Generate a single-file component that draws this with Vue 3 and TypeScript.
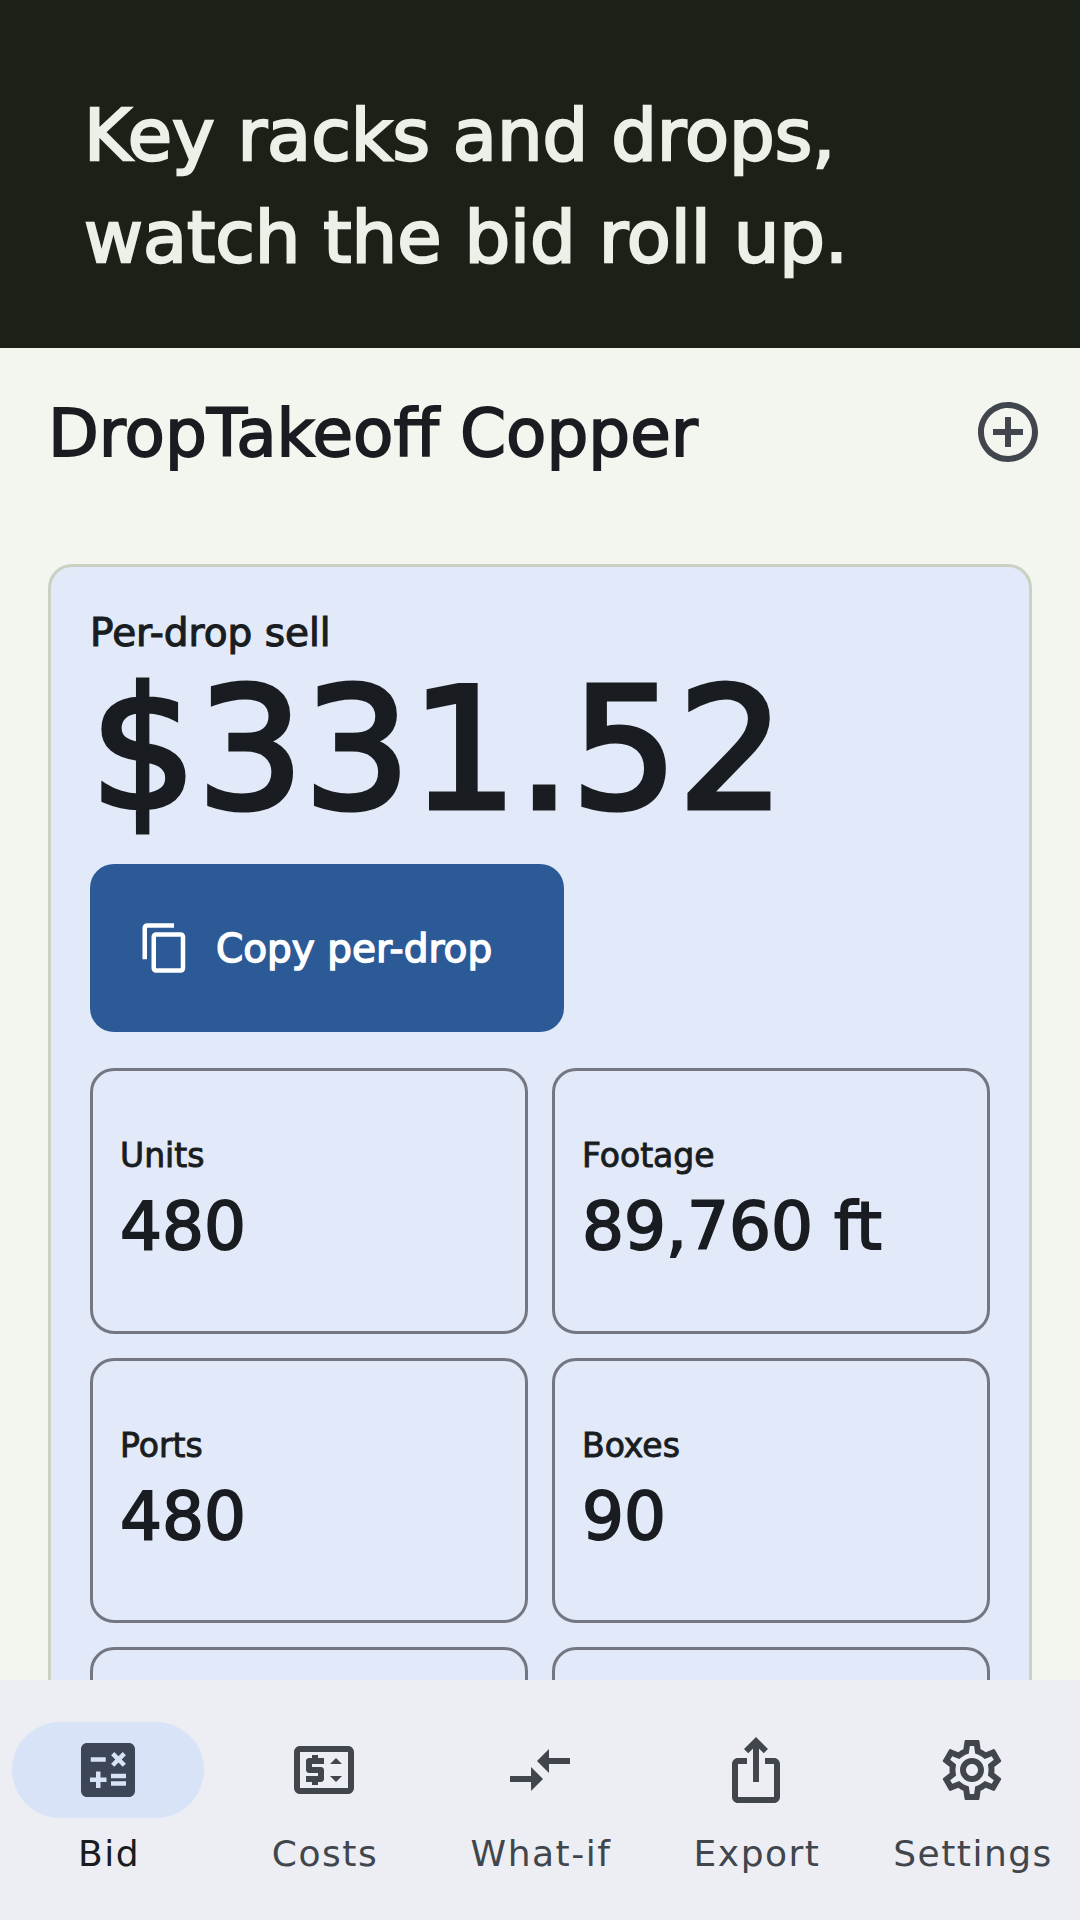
<script setup lang="ts">
interface Stat { id: number; label: string; value: string }
interface NavItem { label: string; d: string; active?: boolean }

const stats: Stat[] = [
  { id: 1, label: 'Units', value: '480' },
  { id: 2, label: 'Footage', value: '89,760 ft' },
  { id: 3, label: 'Ports', value: '480' },
  { id: 4, label: 'Boxes', value: '90' },
  { id: 5, label: '', value: '' },
  { id: 6, label: '', value: '' },
]

const navItems: NavItem[] = [
  { label: 'Bid', active: true, d: 'M19,3H5C3.9,3,3,3.9,3,5v14c0,1.1,0.9,2,2,2h14c1.1,0,2-0.9,2-2V5C21,3.9,20.1,3,19,3z M13.03,7.06L14.09,6l1.41,1.41 L16.91,6l1.06,1.06l-1.41,1.41l1.41,1.41l-1.06,1.06L15.5,9.54l-1.41,1.41l-1.06-1.06l1.41-1.41L13.03,7.06z M6.25,7.72h5v1.5h-5 V7.72z M11.5,16h-2v2H8v-2H6v-1.5h2v-2h1.5v2h2V16z M18,17.25h-5v-1.5h5V17.25z M18,14.75h-5v-1.5h5V14.75z' },
  { label: 'Costs', d: 'M8,17h2v-1h1c0.55,0,1-0.45,1-1v-3c0-0.55-0.45-1-1-1H8v-1h4V8h-2V7H8v1H7C6.45,8,6,8.45,6,9v3c0,0.55,0.45,1,1,1h3v1H6v2h2V17z M20,4H4C2.89,4,2.01,4.89,2.01,6L2,18c0,1.11,0.89,2,2,2h16c1.11,0,2-0.89,2-2V6C22,4.89,21.11,4,20,4z M20,18H4V6h16V18z M14,10l2-2l2,2H14z M18,14l-2,2l-2-2H18z' },
  { label: 'What-if', d: 'M9.01 14H2v2h7.01v3L13 15l-3.99-4v3zm5.98-1v-3H22V8h-7.01V5L11 9l3.99 4z' },
  { label: 'Export', d: 'M16 5l-1.42 1.42-1.59-1.59V16h-1.98V4.83L9.42 6.42 8 5l4-4 4 4zm4 5v11c0 1.1-.9 2-2 2H6c-1.11 0-2-.9-2-2V10c0-1.11.89-2 2-2h3v2H6v11h12V10h-3V8h3c1.1 0 2 .89 2 2z' },
  { label: 'Settings', d: 'M19.43 12.98c.04-.32.07-.64.07-.98 0-.34-.03-.66-.07-.98l2.11-1.65c.19-.15.24-.42.12-.64l-2-3.46c-.09-.16-.26-.25-.44-.25-.06 0-.12.01-.17.03l-2.49 1c-.52-.4-1.08-.73-1.69-.98l-.38-2.65C14.46 2.18 14.25 2 14 2h-4c-.25 0-.46.18-.49.42l-.38 2.65c-.61.25-1.17.59-1.69.98l-2.49-1c-.06-.02-.12-.03-.18-.03-.17 0-.34.09-.43.25l-2 3.46c-.13.22-.07.49.12.64l2.11 1.65c-.04.32-.07.65-.07.98 0 .33.03.66.07.98l-2.11 1.65c-.19.15-.24.42-.12.64l2 3.46c.09.16.26.25.44.25.06 0 .12-.01.17-.03l2.49-1c.52.4 1.08.73 1.69.98l.38 2.65c.03.24.24.42.49.42h4c.25 0 .46-.18.49-.42l.38-2.65c.61-.25 1.17-.59 1.69-.98l2.49 1c.06.02.12.03.18.03.17 0 .34-.09.43-.25l2-3.46c.12-.22.07-.49-.12-.64l-2.11-1.65zm-1.98-1.71c.04.31.05.52.05.73 0 .21-.02.43-.05.73l-.14 1.13.89.7 1.08.84-.7 1.21-1.27-.51-1.04-.42-.9.68c-.43.32-.84.56-1.25.73l-1.06.43-.16 1.13-.2 1.35h-1.4l-.19-1.35-.16-1.13-1.06-.43c-.43-.18-.83-.41-1.23-.71l-.91-.7-1.06.43-1.27.51-.7-1.21 1.08-.84.89-.7-.14-1.13c-.03-.31-.05-.54-.05-.74s.02-.43.05-.73l.14-1.13-.89-.7-1.08-.84.7-1.21 1.27.51 1.04.42.9-.68c.43-.32.84-.56 1.25-.73l1.06-.43.16-1.13.2-1.35h1.39l.19 1.35.16 1.13 1.06.43c.43.18.83.41 1.23.71l.91.7 1.06-.43 1.27-.51.7 1.21-1.07.85-.89.7.14 1.13zM12 8c-2.21 0-4 1.79-4 4s1.79 4 4 4 4-1.79 4-4-1.79-4-4-4zm0 6c-1.1 0-2-.9-2-2s.9-2 2-2 2 .9 2 2-.9 2-2 2z' },
]
</script>

<template>
  <div class="app">
    <header class="hero">
      <h1 class="hero-text">Key racks and drops,<br />watch the bid roll up.</h1>
    </header>
    <main class="main">
      <div class="top-bar">
        <h2 class="title">DropTakeoff Copper</h2>
        <button class="icon-btn" aria-label="Add">
          <svg class="icon-72" viewBox="0 0 24 24"><path d="M13 7h-2v4H7v2h4v4h2v-4h4v-2h-4V7zm-1-5C6.48 2 2 6.48 2 12s4.48 10 10 10 10-4.48 10-10S17.52 2 12 2zm0 18c-4.41 0-8-3.59-8-8s3.59-8 8-8 8 3.59 8 8-3.59 8-8 8z" /></svg>
        </button>
      </div>
      <section class="card">
        <div class="sell-label">Per-drop sell</div>
        <div class="price">$331.52</div>
        <button class="copy-btn">
          <svg class="copy-icon" viewBox="0 0 24 24"><path d="M16 1H4c-1.1 0-2 .9-2 2v14h2V3h12V1zm3 4H8c-1.1 0-2 .9-2 2v14c0 1.1.9 2 2 2h11c1.1 0 2-.9 2-2V7c0-1.1-.9-2-2-2zm0 16H8V7h11v14z" /></svg>
          <span>Copy per-drop</span>
        </button>
        <div class="stats">
          <div v-for="s in stats" :key="s.id" class="stat">
            <div v-if="s.label" class="stat-label">{{ s.label }}</div>
            <div v-if="s.value" class="stat-value">{{ s.value }}</div>
          </div>
        </div>
      </section>
    </main>
    <nav class="nav">
      <div v-for="item in navItems" :key="item.label" class="nav-item" :class="{ active: item.active }">
        <div class="pill">
          <svg class="icon-72" viewBox="0 0 24 24"><path :d="item.d" /></svg>
        </div>
        <div class="nav-label">{{ item.label }}</div>
      </div>
    </nav>
  </div>
</template>

<style>
html, body { margin: 0; padding: 0; }
</style>

<style scoped>
.app {
  width: 1080px;
  height: 1920px;
  display: flex;
  flex-direction: column;
  overflow: hidden;
  background: #f3f6ef;
  font-family: "DejaVu Sans", sans-serif;
  color: #191c20;
}
.hero {
  flex: none;
  background: #1c2118;
  padding: 84px 84px 60px;
}
.hero-text {
  margin: 0;
  font-size: 72px;
  line-height: 102px;
  font-weight: 400;
  color: #edf0e8;
  -webkit-text-stroke: 2.4px #edf0e8;
}
.main {
  flex: 1;
  min-height: 0;
  overflow: hidden;
}
.top-bar {
  display: flex;
  align-items: center;
  justify-content: space-between;
  padding: 12px 0 0 48px;
}
.title {
  margin: 0;
  padding-top: 4px;
  font-size: 66px;
  line-height: 88px;
  font-weight: 400;
  -webkit-text-stroke: 1.8px #191c20;
}
.icon-btn {
  width: 144px;
  height: 144px;
  padding: 0;
  border: 0;
  background: transparent;
  display: flex;
  align-items: center;
  justify-content: center;
}
.icon-72 {
  width: 72px;
  height: 72px;
  display: block;
  fill: #41454c;
}
.card {
  margin: 60px 48px 0;
  padding: 39px;
  border: 3px solid #cbd1c2;
  border-radius: 24px;
  background: #e2e9f8;
}
.sell-label {
  font-size: 39px;
  line-height: 54px;
  -webkit-text-stroke: 1.1px #191c20;
}
.price {
  margin-top: -6px;
  font-size: 168px;
  line-height: 192px;
  -webkit-text-stroke: 5.2px #191c20;
}
.copy-btn {
  display: flex;
  align-items: center;
  gap: 24px;
  width: 474px;
  height: 168px;
  margin-top: 18px;
  padding: 0 48px;
  border: 0;
  border-radius: 24px;
  background: #2c5a97;
  color: #fff;
  font-family: inherit;
  font-size: 39px;
  font-weight: 500;
  -webkit-text-stroke: 1.4px #fff;
  white-space: nowrap;
}
.copy-icon {
  width: 54px;
  height: 54px;
  flex: none;
  fill: #fff;
}
.stats {
  display: grid;
  grid-template-columns: 438px 438px;
  gap: 24px;
  margin-top: 36px;
}
.stat {
  height: 265.5px;
  box-sizing: border-box;
  padding: 0 27px 3px;
  border: 3px solid #747782;
  border-radius: 24px;
  display: flex;
  flex-direction: column;
  justify-content: center;
}
.stat-label {
  margin-bottom: 2px;
  font-size: 33px;
  line-height: 54px;
  -webkit-text-stroke: 0.9px #191c20;
}
.stat-value {
  font-size: 66px;
  line-height: 84px;
  -webkit-text-stroke: 1.9px #191c20;
}
.nav {
  flex: none;
  height: 240px;
  background: #eceef4;
  display: flex;
}
.nav-item {
  flex: 1;
  display: flex;
  flex-direction: column;
  align-items: center;
  padding-top: 42px;
  color: #41454c;
}
.pill {
  width: 192px;
  height: 96px;
  border-radius: 48px;
  display: flex;
  align-items: center;
  justify-content: center;
}
.nav-item.active { color: #191c20; }
.nav-item.active .pill { background: #d8e3f7; }
.nav-item.active .icon-72 { fill: #3d4657; }
.nav-label {
  margin-top: 12px;
  padding-left: 2px;
  font-size: 36px;
  line-height: 48px;
  letter-spacing: 1.5px;
}
</style>
